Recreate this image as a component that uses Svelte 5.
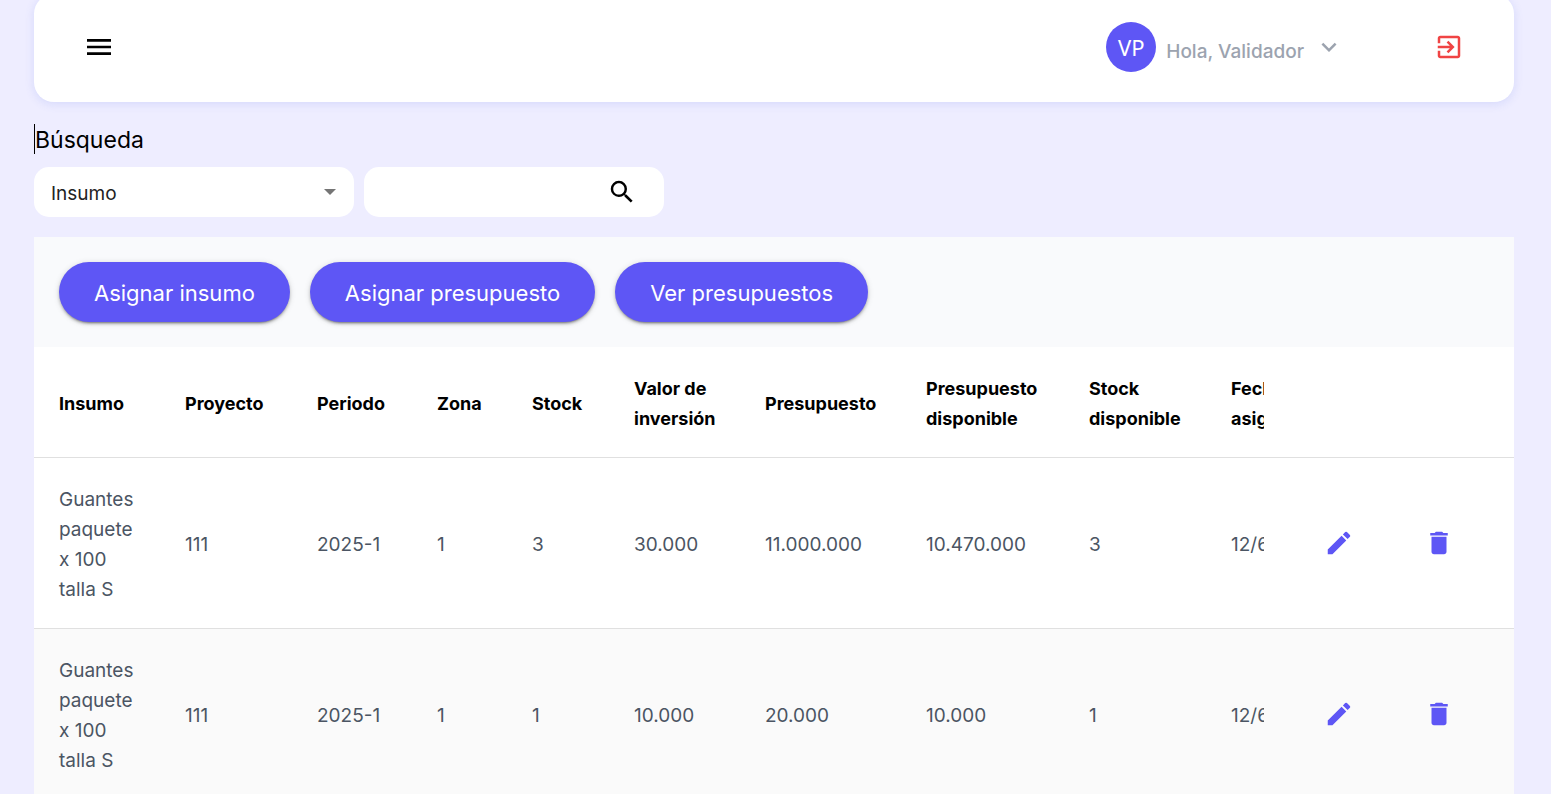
<script>
  let field = $state('insumo');
  let query = $state('');

  const columns = [
    { label: 'Insumo', width: 126 },
    { label: 'Proyecto', width: 132 },
    { label: 'Periodo', width: 120 },
    { label: 'Zona', width: 95 },
    { label: 'Stock', width: 102 },
    { label: 'Valor de inversión', width: 131 },
    { label: 'Presupuesto', width: 161 },
    { label: 'Presupuesto disponible', width: 163 },
    { label: 'Stock disponible', width: 142 },
    { label: 'Fecha asignación', width: 150 }
  ];

  const rows = [
    ['Guantes paquete x 100 talla S', '111', '2025-1', '1', '3', '30.000', '11.000.000', '10.470.000', '3', '12/6/2025'],
    ['Guantes paquete x 100 talla S', '111', '2025-1', '1', '1', '10.000', '20.000', '10.000', '1', '12/6/2025']
  ];

  const actions = ['Asignar insumo', 'Asignar presupuesto', 'Ver presupuestos'];
</script>

<div class="page">
  <header class="topbar">
    <button class="icon-btn" aria-label="Menú">
      <svg viewBox="0 0 24 24" width="32" height="32"><path d="M3 18h18v-2H3v2zm0-5h18v-2H3v2zm0-7v2h18V6H3z" /></svg>
    </button>
    <div class="account">
      <button class="user">
        <span class="avatar">VP</span>
        <span class="hello">Hola, Validador</span>
        <svg class="chevron" viewBox="0 0 24 24" width="30" height="30"><path d="M7.41 8.59 12 13.17l4.59-4.58L18 10l-6 6-6-6z" /></svg>
      </button>
      <button class="icon-btn exit" aria-label="Salir">
        <svg viewBox="0 0 24 24" width="30" height="30"><path d="M10.09 15.59 11.5 17l5-5-5-5-1.41 1.41L12.67 11H3v2h9.67l-2.58 2.59zM19 3H5c-1.11 0-2 .9-2 2v4h2V5h14v14H5v-4H3v4c0 1.1.89 2 2 2h14c1.1 0 2-.9 2-2V5c0-1.1-.9-2-2-2z" /></svg>
      </button>
    </div>
  </header>

  <main>
    <h1>Búsqueda</h1>
    <form class="filters" onsubmit={(e) => e.preventDefault()}>
      <div class="select">
        <select aria-label="Campo" bind:value={field}>
          <option value="insumo">Insumo</option>
        </select>
        <svg viewBox="0 0 12 6" width="12" height="6" aria-hidden="true"><path d="M0 0h12L6 6z" /></svg>
      </div>
      <div class="search">
        <input type="text" aria-label="Buscar" bind:value={query} />
        <button class="icon-btn" aria-label="Buscar">
          <svg viewBox="0 0 24 24" width="30" height="30"><path d="M15.5 14h-.79l-.28-.27A6.471 6.471 0 0 0 16 9.5 6.5 6.5 0 1 0 9.5 16c1.61 0 3.09-.59 4.23-1.57l.27.28v.79l5 4.99L20.49 19l-4.99-5zm-6 0C7.01 14 5 11.99 5 9.5S7.01 5 9.5 5 14 7.01 14 9.5 11.99 14 9.5 14z" /></svg>
        </button>
      </div>
    </form>

    <section class="panel">
      <div class="toolbar">
        {#each actions as action}
          <button class="primary">{action}</button>
        {/each}
      </div>
      <div class="scroller">
        <table>
          <colgroup>
            {#each columns as column}
              <col style="width: {column.width}px" />
            {/each}
            <col class="action-col" />
            <col class="action-col" />
          </colgroup>
          <thead>
            <tr>
              {#each columns as column}
                <th scope="col">{column.label}</th>
              {/each}
              <th class="pin edit"></th>
              <th class="pin delete"></th>
            </tr>
          </thead>
          <tbody>
            {#each rows as row}
              <tr>
                {#each row as value}
                  <td>{value}</td>
                {/each}
                <td class="pin edit">
                  <button class="icon-btn" aria-label="Editar">
                    <svg viewBox="0 0 24 24" width="30" height="30"><path d="M3 17.25V21h3.75L17.81 9.94l-3.75-3.75L3 17.25zM20.71 7.04a.996.996 0 0 0 0-1.41l-2.34-2.34a.996.996 0 0 0-1.41 0l-1.83 1.83 3.75 3.75 1.83-1.83z" /></svg>
                  </button>
                </td>
                <td class="pin delete">
                  <button class="icon-btn" aria-label="Eliminar">
                    <svg viewBox="0 0 24 24" width="30" height="30"><path d="M6 19c0 1.1.9 2 2 2h8c1.1 0 2-.9 2-2V7H6v12zM19 4h-3.5l-1-1h-5l-1 1H5v2h14V4z" /></svg>
                  </button>
                </td>
              </tr>
            {/each}
          </tbody>
        </table>
      </div>
    </section>
  </main>
</div>

<style>
  :global(body) {
    margin: 0;
    background: #eeedff;
  }

  .page {
    box-sizing: border-box;
    height: 100vh;
    overflow: hidden;
    padding: 0 37px 0 34px;
    background: #eeedff;
    color: #000;
    font-family: Inter, 'Liberation Sans', sans-serif;
    font-size: 19px;
    line-height: 30px;
  }

  button,
  input,
  select {
    border: 0;
    padding: 0;
    margin: 0;
    background: none;
    color: inherit;
    font: inherit;
  }

  button {
    cursor: pointer;
  }

  svg {
    display: block;
    fill: currentColor;
  }

  .icon-btn {
    display: flex;
    align-items: center;
    justify-content: center;
    width: 50px;
    height: 50px;
  }

  .topbar {
    display: flex;
    align-items: center;
    justify-content: space-between;
    box-sizing: border-box;
    height: 108px;
    margin-top: -6px;
    padding: 0 40px 2px;
    border-radius: 20px;
    background: #fff;
    box-shadow: 0 2px 10px rgba(90, 110, 230, 0.16);
  }

  .account {
    display: flex;
    align-items: center;
    gap: 80px;
  }

  .user {
    display: flex;
    align-items: center;
    gap: 10px;
    color: #9ca3af;
    font-weight: 500;
  }

  .avatar {
    display: flex;
    align-items: center;
    justify-content: center;
    width: 50px;
    height: 50px;
    border-radius: 50%;
    background: #5e56f5;
    color: #fff;
    font-family: 'Noto Sans', sans-serif;
    font-size: 22px;
    font-weight: 400;
  }

  .hello {
    padding-top: 10px;
  }

  .exit {
    color: #f04444;
  }

  h1 {
    margin: 22px 0 13px;
    padding-top: 2px;
    border-left: 1px solid #000;
    font-size: 23px;
    font-weight: 400;
    line-height: 28px;
  }

  .filters {
    display: flex;
    gap: 10px;
    margin-bottom: 20px;
  }

  .select {
    display: grid;
    align-items: center;
    width: 320px;
    height: 50px;
    border-radius: 15px;
    background: #fff;
    color: #222;
  }

  .select select,
  .select svg {
    grid-area: 1 / 1;
  }

  .select select {
    appearance: none;
    width: 100%;
    height: 50px;
    padding: 4px 40px 0 17px;
  }

  .select svg {
    justify-self: end;
    margin-right: 18px;
    color: #757575;
    pointer-events: none;
  }

  .search {
    display: flex;
    box-sizing: border-box;
    width: 300px;
    padding: 0 17px;
    border-radius: 15px;
    background: #fff;
  }

  .search input {
    flex: 1;
    min-width: 0;
    outline: 0;
  }

  .panel {
    background: #fff;
  }

  .toolbar {
    display: flex;
    gap: 20px;
    padding: 25px;
    background: #f9fafc;
  }

  .primary {
    height: 60px;
    padding: 2px 35px 0;
    border-radius: 30px;
    background: #5e56f5;
    color: #fff;
    font-size: 22px;
    font-weight: 400;
    box-shadow: 0 3px 2px -2px rgba(0, 0, 0, 0.3), 0 2px 3px rgba(0, 0, 0, 0.2), 0 1px 6px rgba(0, 0, 0, 0.14);
  }

  .scroller {
    overflow-x: auto;
    scrollbar-width: none;
  }

  table {
    width: 1572px;
    min-width: 100%;
    table-layout: fixed;
    border-collapse: separate;
    border-spacing: 0;
  }

  .action-col {
    width: 125px;
  }

  th,
  td {
    padding: 27px 25px 23px;
    border-bottom: 1px solid #e0e0e0;
    text-align: left;
    vertical-align: middle;
  }

  th {
    font-size: 18px;
    font-weight: 700;
  }

  td {
    color: #4b5563;
  }

  tr {
    background: #fff;
  }

  tbody tr:nth-child(even) {
    background: #fafafa;
  }

  .pin {
    position: sticky;
    background: inherit;
    color: #5e56f5;
  }

  .edit {
    right: 125px;
    padding: 0 0 0 50px;
  }

  .delete {
    right: 0;
    padding: 0 25px;
  }
</style>
